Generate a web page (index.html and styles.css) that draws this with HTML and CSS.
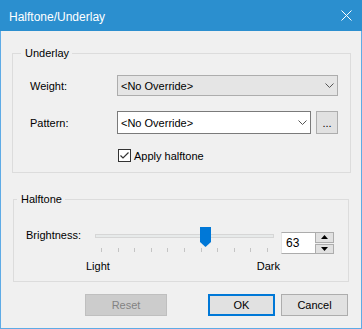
FILE: index.html
```html
<!DOCTYPE html>
<html lang="en">
<head>
    <meta charset="UTF-8">
    <title>Halftone/Underlay</title>
    <link rel="stylesheet" href="styles.css">
</head>
<body>
    <div class="dialog">
        <div class="titlebar">
            <span class="title">Halftone/Underlay</span>
            <svg class="close" width="11" height="11" viewBox="0 0 11 11">
                <path d="M0.5 0.5L10.5 10.5M10.5 0.5L0.5 10.5" stroke="#fff" stroke-width="1" fill="none"/>
            </svg>
        </div>

        <div class="client">
            <fieldset class="group group-underlay">
                <legend>Underlay</legend>
                <div class="underlay-body">
                    <div class="field-row">
                        <span class="field-label">Weight:</span>
                        <div class="combo combo-list">
                            <span>&lt;No Override&gt;</span>
                            <svg width="9" height="5" viewBox="0 0 9 5"><path d="M0.5 0.5L4.5 4.5L8.5 0.5" stroke="#555" fill="none"/></svg>
                        </div>
                    </div>
                    <div class="field-row">
                        <span class="field-label">Pattern:</span>
                        <div class="combo combo-edit">
                            <span>&lt;No Override&gt;</span>
                            <svg width="9" height="5" viewBox="0 0 9 5"><path d="M0.5 0.5L4.5 4.5L8.5 0.5" stroke="#555" fill="none"/></svg>
                        </div>
                        <div class="browse-btn">...</div>
                    </div>
                    <div class="check-row">
                        <span class="checkbox">
                            <svg width="11" height="11" viewBox="0 0 11 11"><path d="M1.5 5.5L4 8L9.5 2.5" stroke="#333" stroke-width="1.2" fill="none"/></svg>
                        </span>
                        <span class="check-label">Apply halftone</span>
                    </div>
                </div>
            </fieldset>

            <fieldset class="group group-halftone">
                <legend>Halftone</legend>
                <div class="halftone-body">
                    <div class="slider-row">
                        <span class="slider-label">Brightness:</span>
                        <div class="slider">
                            <div class="track"></div>
                            <div class="ticks">
                                <span></span><span></span><span></span><span></span>
                                <span></span><span></span><span></span><span></span>
                                <span></span><span></span><span></span>
                            </div>
                            <svg class="thumb" width="11" height="20" viewBox="0 0 11 20">
                                <path d="M0 0H11V15L5.5 20L0 15Z" fill="#0078d7"/>
                            </svg>
                        </div>
                        <div class="spin">
                            <div class="spin-edit">63</div>
                            <div class="spin-buttons">
                                <div class="spin-btn">
                                    <svg width="7" height="4" viewBox="0 0 7 4"><path d="M0 4L3.5 0L7 4Z" fill="#000"/></svg>
                                </div>
                                <div class="spin-btn">
                                    <svg width="7" height="4" viewBox="0 0 7 4"><path d="M0 0L3.5 4L7 0Z" fill="#000"/></svg>
                                </div>
                            </div>
                        </div>
                    </div>
                    <div class="scale-labels">
                        <span>Light</span>
                        <span>Dark</span>
                    </div>
                </div>
            </fieldset>

            <div class="buttons">
                <button class="btn btn-reset" disabled>Reset</button>
                <button class="btn btn-default">OK</button>
                <button class="btn">Cancel</button>
            </div>
        </div>
    </div>
</body>
</html>
```

FILE: styles.css
```css
* {
    box-sizing: border-box;
}

body {
    margin: 0;
    font-family: "Liberation Sans", Arial, sans-serif;
    font-size: 11px;
    color: #000;
    background: #f0f0f0;
}

.dialog {
    width: 362px;
    height: 329px;
    display: flex;
    flex-direction: column;
}

.titlebar {
    height: 31px;
    flex-shrink: 0;
    background: #2b8fcf;
    color: #fff;
    display: flex;
    align-items: center;
    justify-content: space-between;
    padding: 0 10px 0 9px;
    font-size: 12px;
}

.title {
    line-height: 14px;
    padding-top: 2px;
}

.client {
    flex: 1;
    border: 1px solid #5eabe6;
    border-top: 0;
    background: #f0f0f0;
}

/* group boxes */
.group {
    margin: 0;
    padding: 0;
    border: 1px solid #dcdcdc;
    min-width: 0;
}

.group legend {
    line-height: 10px;
    padding: 0 3px 0 4px;
}

.group-underlay {
    margin: 17px 0 0 11px;
    width: 339px;
}

.group-underlay legend {
    margin-left: 8px;
}

.group-halftone {
    margin: 21px 0 0 12px;
    width: 336px;
}

.group-halftone legend {
    margin-left: 3px;
}

.underlay-body {
    padding: 17px 12px 10px 17px;
    display: flex;
    flex-direction: column;
    gap: 15px;
}

.field-row {
    display: flex;
    align-items: center;
}

.field-label {
    width: 87px;
}

.combo {
    display: flex;
    align-items: center;
    justify-content: space-between;
    padding: 0 3px 0 3px;
    border: 1px solid #adadad;
}

.combo-list {
    width: 221px;
    height: 21px;
    background: #e5e5e5;
}

.combo-edit {
    width: 194px;
    height: 23px;
    background: #fff;
    border-color: #7a7a7a;
}

.browse-btn {
    width: 22px;
    height: 23px;
    margin-left: 5px;
    border: 1px solid #adadad;
    background: #e1e1e1;
    text-align: center;
    line-height: 23px;
}

.check-row {
    display: flex;
    align-items: center;
    height: 13px;
    padding-left: 88px;
}

.checkbox {
    width: 13px;
    height: 13px;
    border: 1px solid #333;
    background: #fff;
    display: flex;
}

.check-label {
    margin-left: 3px;
}

/* halftone */
.halftone-body {
    padding: 23px 0 8px 12px;
}

.slider-row {
    display: flex;
    align-items: flex-start;
}

.slider-label {
    width: 69px;
    margin-top: 2px;
    line-height: 13px;
}

.slider {
    position: relative;
    width: 179px;
    height: 26px;
}

.track {
    margin-top: 7px;
    height: 4px;
    border: 1px solid #d6d6d6;
    background: #e7eaea;
}

.ticks {
    display: flex;
    justify-content: space-between;
    width: 167px;
    margin: 10px 0 0 6px;
}

.ticks span {
    width: 1px;
    height: 4px;
    background: #c4c4c4;
}

.thumb {
    position: absolute;
    left: 105px;
    top: 0;
}

.spin {
    display: flex;
    height: 22px;
    margin: 5px 0 0 7px;
}

.spin-edit {
    width: 34px;
    background: #fff;
    border: 1px solid #acacac;
    border-left-color: #e3e3e3;
    border-right: 0;
    padding-left: 4px;
    line-height: 20px;
    font-size: 12px;
}

.spin-buttons {
    width: 19px;
    display: flex;
    flex-direction: column;
    gap: 1px;
}

.spin-btn {
    flex: 1;
    display: flex;
    align-items: center;
    justify-content: center;
    background: #e1e1e1;
    border: 1px solid #adadad;
}

.scale-labels {
    display: flex;
    justify-content: space-between;
    width: 194px;
    margin: 6px 0 0 60px;
    line-height: 13px;
}

/* dialog buttons */
.buttons {
    display: flex;
    justify-content: flex-end;
    gap: 6px;
    margin-top: 12px;
    padding-right: 13px;
}

.btn {
    width: 67px;
    height: 22px;
    padding: 0;
    font: inherit;
    color: #000;
    background: #e1e1e1;
    border: 1px solid #adadad;
}

.btn-reset {
    width: 82px;
    margin-right: 35px;
    background: #cccccc;
    border-color: #bfbfbf;
    color: #838383;
}

.btn-default {
    border: 2px solid #0078d7;
}
```
